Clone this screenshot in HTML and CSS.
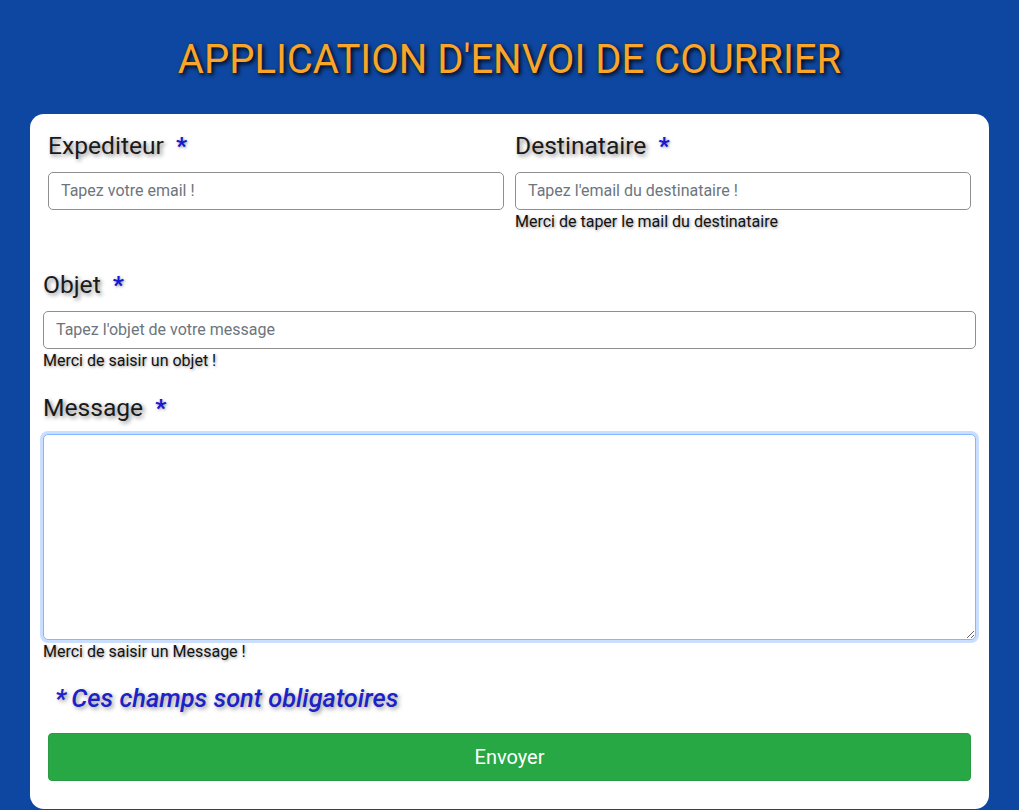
FILE: index.html
```html
<!DOCTYPE html>
<html lang="fr">
<head>
<meta charset="utf-8">
<title>Application d'envoi de courrier</title>
<link rel="stylesheet" href="styles.css">
</head>
<body>
  <h1 class="title">APPLICATION D'ENVOI DE COURRIER</h1>
  <form class="card">
    <div class="row">
      <div class="field">
        <label class="label">Expediteur <span class="req">*</span></label>
        <input class="input" type="email" placeholder="Tapez votre email !">
      </div>
      <div class="field">
        <label class="label">Destinataire <span class="req">*</span></label>
        <input class="input" type="email" placeholder="Tapez l'email du destinataire !">
        <div class="help">Merci de taper le mail du destinataire</div>
      </div>
    </div>
    <div class="wide objet">
      <label class="label">Objet <span class="req">*</span></label>
      <input class="input" type="text" placeholder="Tapez l'objet de votre message">
      <div class="help">Merci de saisir un objet !</div>
    </div>
    <div class="wide message">
      <label class="label">Message <span class="req">*</span></label>
      <textarea class="textarea"></textarea>
      <div class="help">Merci de saisir un Message !</div>
    </div>
    <p class="note"><span class="note-star">*</span>Ces champs sont obligatoires</p>
    <button class="btn" type="button">Envoyer</button>
  </form>
</body>
</html>
```
FILE: styles.css
```css
* { box-sizing: border-box; }

html, body {
  margin: 0;
  padding: 0;
}

body {
  background: #0e47a1;
  font-family: Roboto, "Liberation Sans", Arial, sans-serif;
  color: #212529;
  padding: 36px 30px 0;
  min-height: 810px;
}

.title {
  margin: 0 0 30px;
  text-align: center;
  font-size: 40px;
  line-height: 48px;
  font-weight: 400;
  color: #f8a52a;
  text-shadow: 2px 2px 4px #000;
}

.card {
  background: #fff;
  border-radius: 14px;
  padding: 18px 13px 28px;
  display: flex;
  flex-direction: column;
}

.row {
  display: flex;
  gap: 11px;
  padding: 0 5px;
}

.field {
  flex: 1;
  display: flex;
  flex-direction: column;
}

.wide {
  display: flex;
  flex-direction: column;
}

.objet { margin-top: 37px; }
.message { margin-top: 21px; }
.message .label { margin-bottom: 12px; }

.label {
  font-size: 24.6px;
  line-height: 28.8px;
  font-weight: 400;
  color: #1a1a1a;
  text-shadow: 2px 2px 4px #888;
  margin-bottom: 11px;
}

.req {
  color: #1717d4;
  margin-left: 6px;
  font-weight: 700;
  text-shadow: 1px 1px 3px #999;
}

.input {
  height: 38px;
  border: 1px solid #8f8f8f;
  border-radius: 5px;
  padding: 6px 12px;
  font-family: inherit;
  font-size: 16px;
  color: #212529;
  background: #fff;
}

.input::placeholder {
  color: #6c757d;
}

.textarea {
  height: 206px;
  border: 1px solid #86b7fe;
  border-radius: 5px;
  box-shadow: 0 0 0 3px rgba(13, 110, 253, 0.22);
  font-family: inherit;
  font-size: 16px;
  padding: 6px 12px;
  resize: vertical;
  outline: none;
}

.help {
  font-size: 16px;
  line-height: 24px;
  color: #111;
  text-shadow: 1px 1px 3px #999;
}

.note {
  margin: 20px 0 0 12px;
  font-size: 25.4px;
  line-height: 29px;
  font-style: italic;
  font-weight: 500;
  color: #1b22c8;
  text-shadow: 2px 2px 4px #999;
}

.note-star { margin-right: 5px; font-weight: 700; }

.btn {
  margin: 20px 5px 0;
  height: 48px;
  background: #28a745;
  border: 1px solid #2a9b44;
  border-radius: 4px;
  color: #fff;
  font-family: inherit;
  font-size: 20px;
  cursor: pointer;
}
```
